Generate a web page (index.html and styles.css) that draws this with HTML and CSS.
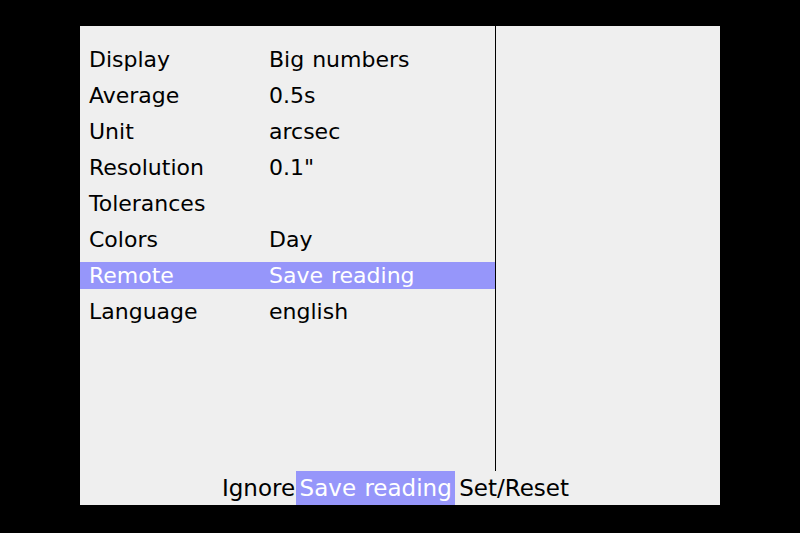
FILE: index.html
```html
<!DOCTYPE html>
<html>
<head>
<meta charset="utf-8">
<link rel="stylesheet" href="styles.css">
</head>
<body>
<div class="screen">
  <div class="panel">
    <div class="main">
      <div class="menu">
        <div class="row"><span class="label">Display</span><span class="value">Big numbers</span></div>
        <div class="row"><span class="label">Average</span><span class="value">0.5s</span></div>
        <div class="row"><span class="label">Unit</span><span class="value">arcsec</span></div>
        <div class="row"><span class="label">Resolution</span><span class="value">0.1"</span></div>
        <div class="row"><span class="label">Tolerances</span><span class="value"></span></div>
        <div class="row"><span class="label">Colors</span><span class="value">Day</span></div>
        <div class="row selected"><span class="label">Remote</span><span class="value">Save reading</span></div>
        <div class="row"><span class="label">Language</span><span class="value">english</span></div>
      </div>
      <div class="side"></div>
    </div>
    <div class="bar">
      <span class="btn">Ignore</span><span class="btn active">Save reading</span><span class="btn wide">Set/Reset</span>
    </div>
  </div>
</div>
</body>
</html>
```

FILE: styles.css
```css
html, body {
  margin: 0;
  padding: 0;
  background: #000;
}
.screen {
  width: 800px;
  height: 533px;
  padding-top: 26px;
  box-sizing: border-box;
  background: #000;
}
.panel {
  width: 640px;
  height: 479px;
  margin-left: 80px;
  background: #efefef;
  display: flex;
  flex-direction: column;
  font-family: "DejaVu Sans", sans-serif;
  color: #000;
}
.main {
  display: flex;
  height: 445px;
}
.menu {
  width: 415px;
  border-right: 1px solid #000;
  padding-top: 20px;
  display: flex;
  flex-direction: column;
  gap: 9px;
  font-size: 22px;
}
.row {
  display: flex;
  height: 27px;
  line-height: 27px;
  padding-left: 9px;
  word-spacing: 1px;
}
.row.selected {
  background: #9696fa;
  color: #fff;
}
.label {
  width: 180px;
}
.side {
  flex: 1;
}
.bar {
  flex: 1;
  display: flex;
  justify-content: center;
  padding-right: 6px;
  font-size: 23px;
  line-height: 34px;
  word-spacing: 1px;
}
.btn {
  padding: 0 1px;
}
.btn.wide {
  padding: 0 4px;
}
.btn.active {
  padding: 0 3.5px;
  background: #9696fa;
  color: #fff;
}
```
